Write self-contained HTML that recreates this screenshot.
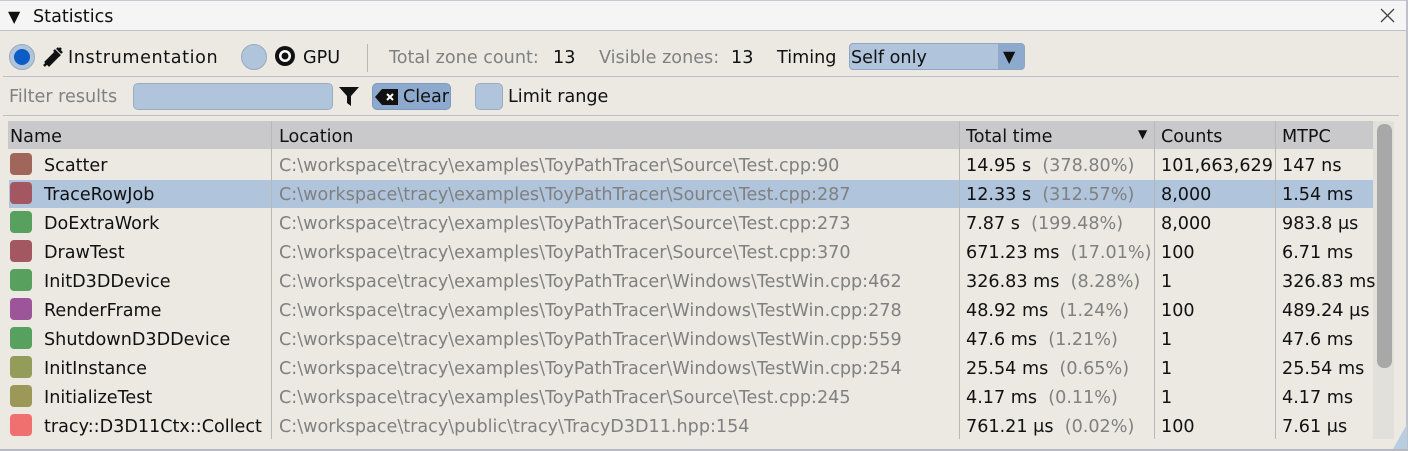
<!DOCTYPE html><html><head><style>
*{margin:0;padding:0;box-sizing:border-box}
body{width:1408px;height:451px;overflow:hidden;background:#ebe9e2;font-family:"DejaVu Sans","Liberation Sans",sans-serif;font-size:17.6px;color:#111;position:relative}
.a{position:absolute;white-space:nowrap;line-height:20px;margin-top:1px}
.g{color:#808080}
.sq{position:absolute;left:10px;width:22px;height:22px;border-radius:4px}
.vl{position:absolute;width:1px;background:#b8b8b8}
</style></head><body>
<div style="position:absolute;left:0;top:0;width:1408px;height:31px;background:#f5f5f5;border-bottom:1px solid #c0c0cc;border-top:1px solid #c8c8d0"></div>
<div class="a" style="left:8px;top:6px;font-size:16px">▼</div>
<div class="a" style="left:33px;top:6px">Statistics</div>
<svg style="position:absolute;left:1380px;top:8px" width="15" height="15"><path d="M1 1L14 14M14 1L1 14" stroke="#444" stroke-width="1.3"/></svg>
<div style="position:absolute;left:1406px;top:0;width:2px;height:451px;background:#c0c0cc"></div>
<div style="position:absolute;left:0;top:449px;width:1408px;height:2px;background:#b8b8c0"></div>

<div style="position:absolute;left:9px;top:44px;width:26px;height:26px;border-radius:50%;background:#b0c4dc;border:1px solid #9aabbf"></div>
<div style="position:absolute;left:14px;top:49px;width:16px;height:16px;border-radius:50%;background:#0d5bc5"></div>
<svg style="position:absolute;left:42px;top:46px" width="22" height="22" viewBox="0 0 22 22"><path d="M2 20l5-5M5 17l-1-1 9-9 3 3-9 9zM12 4l6 6M15 2l5 5M17 4l2-2" stroke="#111" stroke-width="2.6" fill="#111"/></svg>
<div class="a" style="left:68px;top:47px;letter-spacing:0.6px">Instrumentation</div>
<div style="position:absolute;left:241px;top:44px;width:26px;height:26px;border-radius:50%;background:#b0c4dc;border:1px solid #9aabbf"></div>
<svg style="position:absolute;left:273px;top:45px" width="24" height="22"><circle cx="12" cy="11" r="10" fill="#111"/><circle cx="12" cy="11" r="6" fill="#fff"/><circle cx="12" cy="11" r="3.5" fill="#111"/></svg>
<div class="a" style="left:303px;top:47px">GPU</div>
<div class="vl" style="left:367px;top:44px;height:28px"></div>
<div class="a g" style="left:389px;top:47px">Total zone count:</div>
<div class="a" style="left:553px;top:47px">13</div>
<div class="a g" style="left:599px;top:47px">Visible zones:</div>
<div class="a" style="left:731px;top:47px">13</div>
<div class="a" style="left:777px;top:47px">Timing</div>
<div style="position:absolute;left:849px;top:43px;width:176px;height:27px;border-radius:4px;background:#b0c4dc;border:1px solid #8fa6c4;overflow:hidden"><div style="position:absolute;right:0;top:0;width:26px;height:27px;background:#8ea9ce"></div></div>
<div class="a" style="left:851px;top:47px">Self only</div>
<div class="a" style="left:1003px;top:46px;font-size:16px">▼</div>
<div style="position:absolute;left:3px;top:76px;width:1396px;height:1px;background:#c0c0cc"></div>

<div class="a g" style="left:9px;top:86px">Filter results</div>
<div style="position:absolute;left:133px;top:83px;width:200px;height:27px;border-radius:5px;background:#b0c4dc;border:1px solid #9aabbf"></div>
<svg style="position:absolute;left:339px;top:86px" width="20" height="20"><path d="M0 1H20L12 10V20L8 17V10Z" fill="#111"/></svg>
<div style="position:absolute;left:372px;top:83px;width:79px;height:27px;border-radius:5px;background:#8ea9ce;border:1px solid #7e99be"></div>
<svg style="position:absolute;left:375px;top:88px" width="24" height="18"><path d="M7 1H23V17H7L0 9Z" fill="#111"/><path d="M12 6l6 6M18 6l-6 6" stroke="#fff" stroke-width="2"/></svg>
<div class="a" style="left:403px;top:86px">Clear</div>
<div style="position:absolute;left:475px;top:83px;width:28px;height:27px;border-radius:5px;background:#b0c4dc;border:1px solid #9aabbf"></div>
<div class="a" style="left:508px;top:86px">Limit range</div>
<div style="position:absolute;left:3px;top:115px;width:1396px;height:1px;background:#c0c0cc"></div>

<div style="position:absolute;left:8px;top:121px;width:1366px;height:28px;background:#c9c9cb"></div>
<div style="position:absolute;left:1373px;top:121px;width:21px;height:318px;background:#e1e0db"></div>
<div style="position:absolute;left:1377px;top:124px;width:15px;height:244px;border-radius:7px;background:#a8a8a8"></div>
<svg style="position:absolute;left:1393px;top:424px" width="14" height="25"><path d="M14 0V25H0Z" fill="#b8cde0"/></svg>
<div style="position:absolute;left:9px;top:180px;width:1364px;height:28px;background:#b0c4dc"></div>
<div class="vl" style="left:271px;top:121px;height:318px"></div>
<div class="vl" style="left:959px;top:121px;height:318px"></div>
<div class="vl" style="left:1154px;top:121px;height:318px"></div>
<div class="vl" style="left:1275px;top:121px;height:318px"></div>
<div class="a" style="left:10px;top:126px">Name</div>
<div class="a" style="left:279px;top:126px">Location</div>
<div class="a" style="left:966px;top:126px">Total time</div>
<div class="a" style="left:1138px;top:123px;font-size:12px">▼</div>
<div class="a" style="left:1161px;top:126px">Counts</div>
<div class="a" style="left:1282px;top:126px">MTPC</div>

<div class="sq" style="top:153px;background:#a0665a"></div><div class="a" style="left:44px;top:155px">Scatter</div><div class="a g" style="left:279px;top:155px">C:\workspace\tracy\examples\ToyPathTracer\Source\Test.cpp:90</div><div class="a" style="left:966px;top:155px">14.95 s&nbsp; <span class="g">(378.80%)</span></div><div class="a" style="left:1161px;top:155px">101,663,629</div><div class="a" style="left:1282px;top:155px">147 ns</div>
<div class="sq" style="top:182px;background:#a35760"></div><div class="a" style="left:44px;top:184px">TraceRowJob</div><div class="a g" style="left:279px;top:184px">C:\workspace\tracy\examples\ToyPathTracer\Source\Test.cpp:287</div><div class="a" style="left:966px;top:184px">12.33 s&nbsp; <span class="g">(312.57%)</span></div><div class="a" style="left:1161px;top:184px">8,000</div><div class="a" style="left:1282px;top:184px">1.54 ms</div>
<div class="sq" style="top:211px;background:#58a05e"></div><div class="a" style="left:44px;top:213px">DoExtraWork</div><div class="a g" style="left:279px;top:213px">C:\workspace\tracy\examples\ToyPathTracer\Source\Test.cpp:273</div><div class="a" style="left:966px;top:213px">7.87 s&nbsp; <span class="g">(199.48%)</span></div><div class="a" style="left:1161px;top:213px">8,000</div><div class="a" style="left:1282px;top:213px">983.8 μs</div>
<div class="sq" style="top:240px;background:#a35760"></div><div class="a" style="left:44px;top:242px">DrawTest</div><div class="a g" style="left:279px;top:242px">C:\workspace\tracy\examples\ToyPathTracer\Source\Test.cpp:370</div><div class="a" style="left:966px;top:242px">671.23 ms&nbsp; <span class="g">(17.01%)</span></div><div class="a" style="left:1161px;top:242px">100</div><div class="a" style="left:1282px;top:242px">6.71 ms</div>
<div class="sq" style="top:269px;background:#58a05e"></div><div class="a" style="left:44px;top:271px">InitD3DDevice</div><div class="a g" style="left:279px;top:271px">C:\workspace\tracy\examples\ToyPathTracer\Windows\TestWin.cpp:462</div><div class="a" style="left:966px;top:271px">326.83 ms&nbsp; <span class="g">(8.28%)</span></div><div class="a" style="left:1161px;top:271px">1</div><div class="a" style="left:1282px;top:271px">326.83 ms</div>
<div class="sq" style="top:298px;background:#9b5598"></div><div class="a" style="left:44px;top:300px">RenderFrame</div><div class="a g" style="left:279px;top:300px">C:\workspace\tracy\examples\ToyPathTracer\Windows\TestWin.cpp:278</div><div class="a" style="left:966px;top:300px">48.92 ms&nbsp; <span class="g">(1.24%)</span></div><div class="a" style="left:1161px;top:300px">100</div><div class="a" style="left:1282px;top:300px">489.24 μs</div>
<div class="sq" style="top:327px;background:#58a05e"></div><div class="a" style="left:44px;top:329px">ShutdownD3DDevice</div><div class="a g" style="left:279px;top:329px">C:\workspace\tracy\examples\ToyPathTracer\Windows\TestWin.cpp:559</div><div class="a" style="left:966px;top:329px">47.6 ms&nbsp; <span class="g">(1.21%)</span></div><div class="a" style="left:1161px;top:329px">1</div><div class="a" style="left:1282px;top:329px">47.6 ms</div>
<div class="sq" style="top:356px;background:#939c58"></div><div class="a" style="left:44px;top:358px">InitInstance</div><div class="a g" style="left:279px;top:358px">C:\workspace\tracy\examples\ToyPathTracer\Windows\TestWin.cpp:254</div><div class="a" style="left:966px;top:358px">25.54 ms&nbsp; <span class="g">(0.65%)</span></div><div class="a" style="left:1161px;top:358px">1</div><div class="a" style="left:1282px;top:358px">25.54 ms</div>
<div class="sq" style="top:385px;background:#9b9858"></div><div class="a" style="left:44px;top:387px">InitializeTest</div><div class="a g" style="left:279px;top:387px">C:\workspace\tracy\examples\ToyPathTracer\Source\Test.cpp:245</div><div class="a" style="left:966px;top:387px">4.17 ms&nbsp; <span class="g">(0.11%)</span></div><div class="a" style="left:1161px;top:387px">1</div><div class="a" style="left:1282px;top:387px">4.17 ms</div>
<div class="sq" style="top:414px;background:#f07070"></div><div class="a" style="left:44px;top:416px">tracy::D3D11Ctx::Collect</div><div class="a g" style="left:279px;top:416px">C:\workspace\tracy\public\tracy\TracyD3D11.hpp:154</div><div class="a" style="left:966px;top:416px">761.21 μs&nbsp; <span class="g">(0.02%)</span></div><div class="a" style="left:1161px;top:416px">100</div><div class="a" style="left:1282px;top:416px">7.61 μs</div>
</body></html>
